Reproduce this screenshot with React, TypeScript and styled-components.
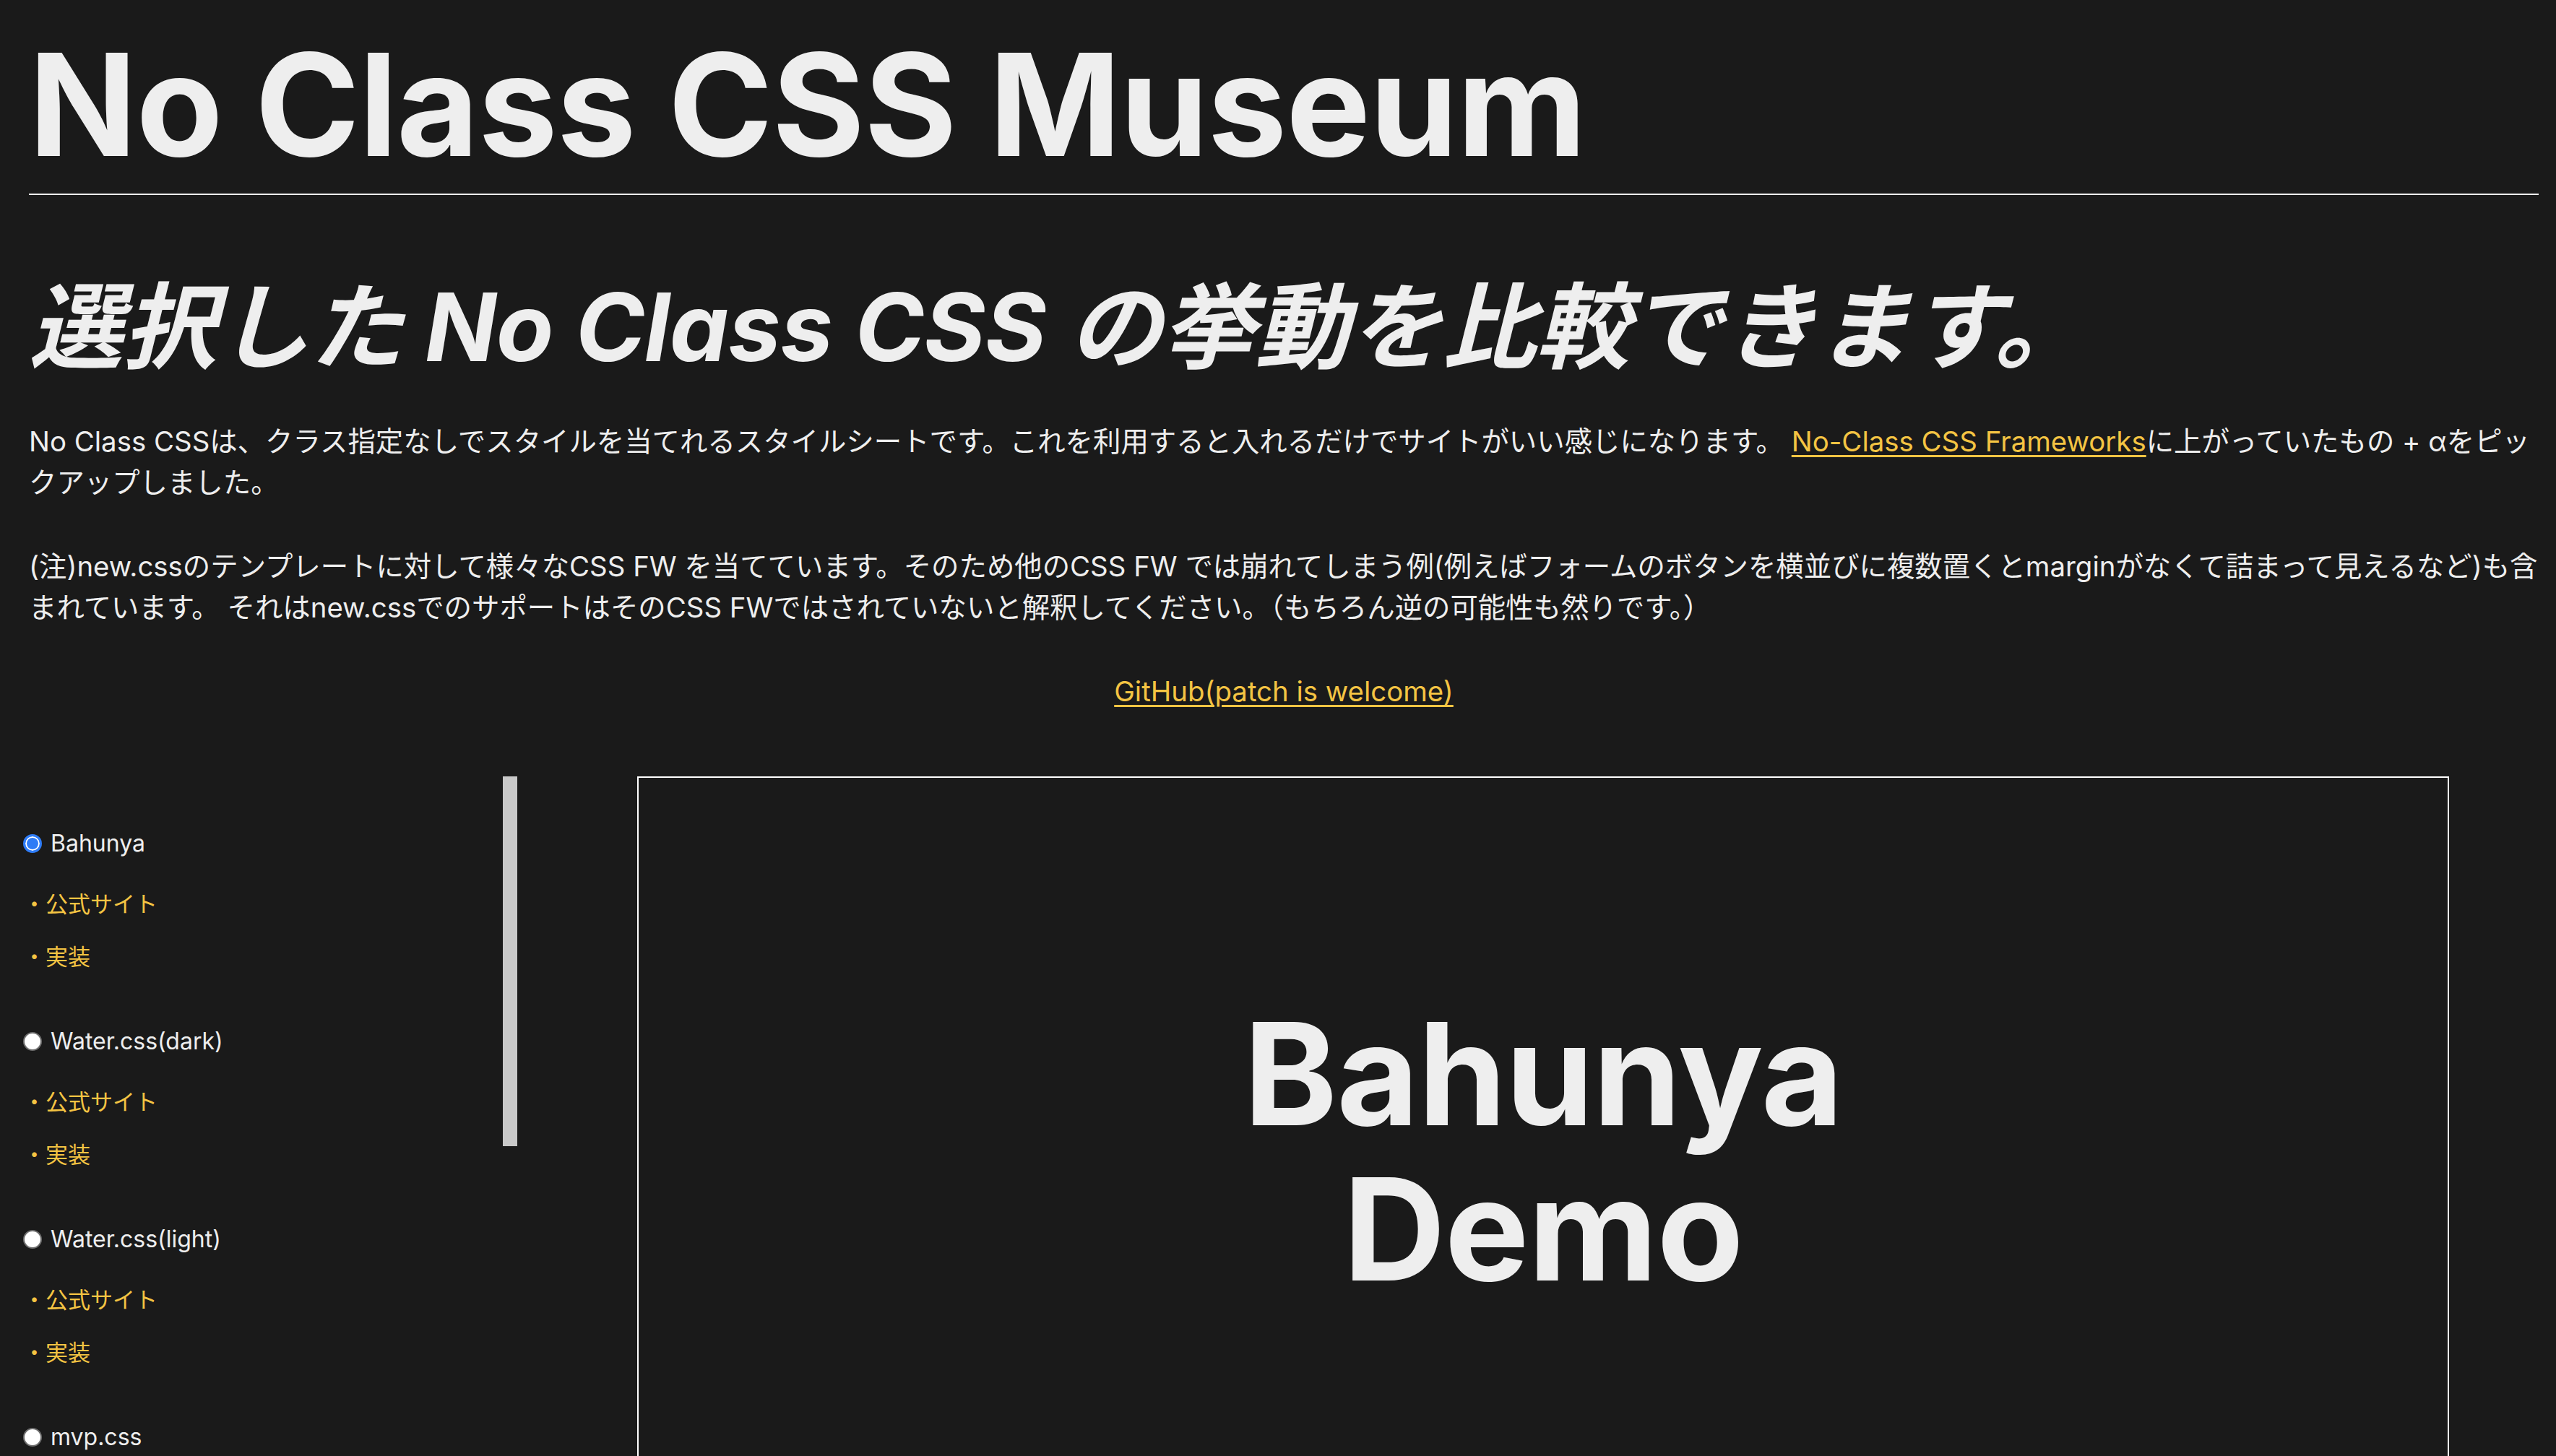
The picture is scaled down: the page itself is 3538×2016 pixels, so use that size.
import React from "react";
import styled, { createGlobalStyle } from "styled-components";

const GlobalStyle = createGlobalStyle`
  *, *::before, *::after { box-sizing: border-box; }
  html, body {
    margin: 0;
    padding: 0;
    height: 100%;
    overflow: hidden;
    background: #1a1a1a;
  }
  body {
    color: #eeeeee;
    font-family: Inter, "Noto Sans CJK JP", sans-serif;
    font-size: 38.4px;
    line-height: 57.6px;
  }
`;

const Page = styled.div`
  display: flex;
  flex-direction: column;
`;

const Intro = styled.header`
  display: flex;
  flex-direction: column;
  padding: 0 24px 0 40px;
`;

const Title = styled.h1`
  margin: 37px 0 0;
  padding-bottom: 15px;
  border-bottom: 2px solid #eeeeee;
  font-size: 196px;
  line-height: 1.1;
  font-weight: 700;
  letter-spacing: -1px;
`;

const Lead = styled.h2`
  margin: 105px 0 0;
  font-size: 130px;
  line-height: 1.2;
  font-weight: 700;
  font-style: italic;
  letter-spacing: -0.5px;
`;

const Text = styled.p<{ $center?: boolean; $gap?: number }>`
  margin: ${(p) => p.$gap ?? 58}px 0 0;
  text-align: ${(p) => (p.$center ? "center" : "left")};
`;

const Link = styled.a`
  color: #f4c443;
  text-decoration: underline;
  text-underline-offset: 5px;
  text-decoration-thickness: 3px;
`;

const Workspace = styled.main`
  display: flex;
  gap: 166px;
  margin-top: 88px;
  padding-left: 22px;
  height: 942px;
  overflow: hidden;
`;

const SidebarPane = styled.div`
  position: relative;
  flex: 0 0 694px;
  height: 100%;
`;

const Sidebar = styled.nav`
  height: 100%;
  overflow-y: auto;
  scrollbar-width: none;
  padding: 71px 20px 75px 10px;
  display: flex;
  flex-direction: column;
  gap: 75px;

  &::-webkit-scrollbar {
    display: none;
  }
`;

const ScrollThumb = styled.div`
  position: absolute;
  top: 0;
  right: 0;
  width: 20px;
  height: 512px;
  background: #c9c9c9;
  pointer-events: none;
`;

const Entry = styled.div`
  display: flex;
  flex-direction: column;
  flex: 0 0 auto;
`;

const Choice = styled.label`
  display: flex;
  align-items: center;
  gap: 12px;
  height: 44px;
  font-size: 32px;
  line-height: 44px;
  color: #eeeeee;
  cursor: pointer;
`;

const Radio = styled.input.attrs({ type: "radio" })`
  appearance: none;
  -webkit-appearance: none;
  margin: 0;
  width: 26px;
  height: 26px;
  border-radius: 50%;
  border: 2px solid #6e6e6e;
  background: #ffffff;
  flex: 0 0 auto;

  &:checked {
    border: 3px solid #2f7cf6;
    background: #2f7cf6;
    box-shadow: inset 0 0 0 2px #ffffff;
  }
`;

const EntryLinks = styled.div`
  display: flex;
  flex-direction: column;
  gap: 33px;
  margin-top: 42px;
`;

const EntryLink = styled.a`
  color: #f4c443;
  text-decoration: none;
  font-size: 31px;
  line-height: 40px;
`;

const Frame = styled.section`
  flex: 0 0 2508px;
  height: 1200px;
  border: 2px solid #ffffff;
  padding-top: 302px;
`;

const DemoTitle = styled.h1`
  margin: 0 auto;
  max-width: 1100px;
  text-align: center;
  font-size: 196px;
  line-height: 1.1;
  font-weight: 700;
  letter-spacing: -1px;
`;

const frameworks = [
  "Bahunya",
  "Water.css(dark)",
  "Water.css(light)",
  "mvp.css",
  "new.css",
  "Sakura",
];

export default function App() {
  const [selected, setSelected] = React.useState(frameworks[0]);
  return (
    <Page>
      <GlobalStyle />
      <Intro>
        <Title>No Class CSS Museum</Title>
        <Lead>選択した No Class CSS の挙動を比較できます。</Lead>
        <Text $gap={52}>
          No Class CSSは、クラス指定なしでスタイルを当てれるスタイルシートです。これを利用すると入れるだけでサイトがいい感じになります。{" "}
          <Link href="#">No-Class CSS Frameworks</Link>に上がっていたもの + αをピックアップしました。
        </Text>
        <Text>
          (注)new.cssのテンプレートに対して様々なCSS FW を当てています。そのため他のCSS FW では崩れてしまう例(例えばフォームのボタンを横並びに複数置くとmarginがなくて詰まって見えるなど)も含まれています。{" "}
          それはnew.cssでのサポートはそのCSS FWではされていないと解釈してください。（もちろん逆の可能性も然りです。）
        </Text>
        <Text $center>
          <Link href="#">GitHub(patch is welcome)</Link>
        </Text>
      </Intro>
      <Workspace>
        <SidebarPane>
          <Sidebar>
            {frameworks.map((name) => (
              <Entry key={name}>
                <Choice>
                  <Radio
                    name="framework"
                    checked={selected === name}
                    onChange={() => setSelected(name)}
                  />
                  {name}
                </Choice>
                <EntryLinks>
                  <EntryLink href="#">・公式サイト</EntryLink>
                  <EntryLink href="#">・実装</EntryLink>
                </EntryLinks>
              </Entry>
            ))}
          </Sidebar>
          <ScrollThumb />
        </SidebarPane>
        <Frame>
          <DemoTitle>{selected} Demo</DemoTitle>
        </Frame>
      </Workspace>
    </Page>
  );
}
